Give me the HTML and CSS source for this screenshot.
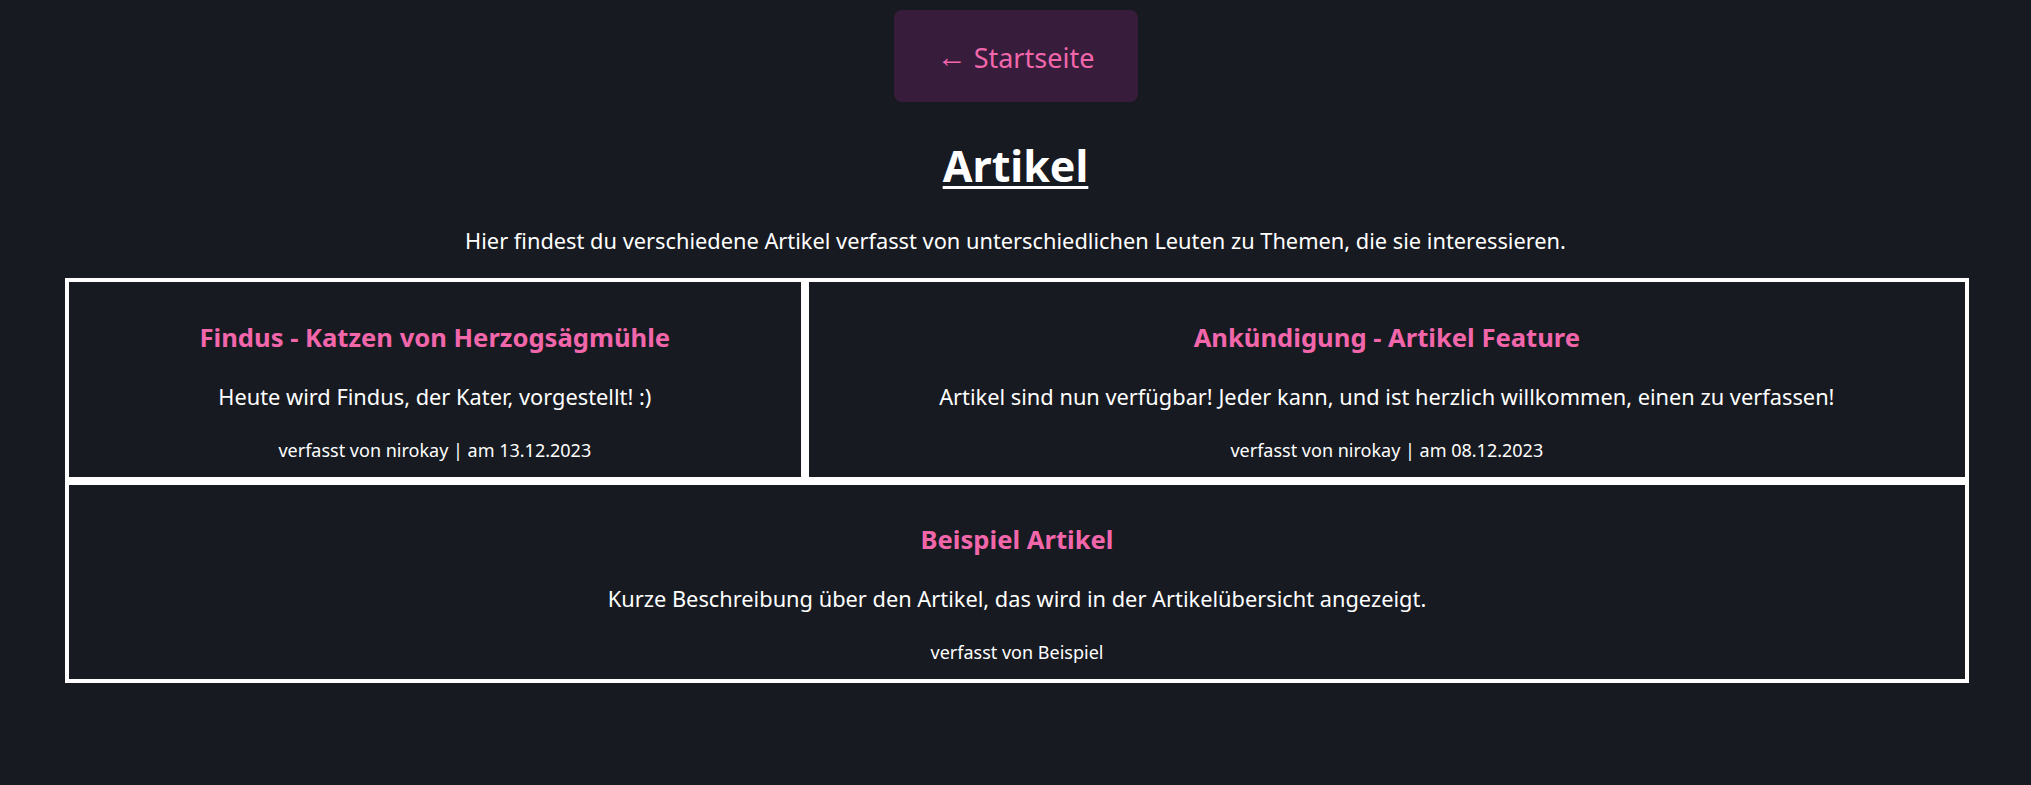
FILE: index.html
```html
<!DOCTYPE html>
<html lang="de">
<head>
<meta charset="utf-8">
<title>Artikel</title>
<link rel="stylesheet" href="styles.css">
</head>
<body>
<div class="top">
  <a class="home-btn" href="#"><span class="arrow">←</span> Startseite</a>
</div>
<h1 class="page-title">Artikel</h1>
<p class="intro">Hier findest du verschiedene Artikel verfasst von unterschiedlichen Leuten zu Themen, die sie interessieren.</p>
<div class="articles">
  <div class="card">
    <h2 class="card-title">Findus - Katzen von Herzogsägmühle</h2>
    <p class="card-desc">Heute wird Findus, der Kater, vorgestellt! :)</p>
    <p class="card-meta">verfasst von nirokay | am 13.12.2023</p>
  </div>
  <div class="card">
    <h2 class="card-title">Ankündigung - Artikel Feature</h2>
    <p class="card-desc">Artikel sind nun verfügbar! Jeder kann, und ist herzlich willkommen, einen zu verfassen!</p>
    <p class="card-meta">verfasst von nirokay | am 08.12.2023</p>
  </div>
  <div class="card">
    <h2 class="card-title">Beispiel Artikel</h2>
    <p class="card-desc">Kurze Beschreibung über den Artikel, das wird in der Artikelübersicht angezeigt.</p>
    <p class="card-meta">verfasst von Beispiel</p>
  </div>
</div>
</body>
</html>
```
FILE: styles.css
```css
html, body {
  margin: 0;
  padding: 0;
  background: #181a21;
  color: #ffffff;
  font-family: "Noto Sans", "Open Sans", sans-serif;
}

body {
  padding-top: 10px;
}

.top {
  display: flex;
  justify-content: center;
}

.home-btn {
  display: block;
  width: 244px;
  height: 92px;
  box-sizing: border-box;
  background: #371c3b;
  border-radius: 8px;
  color: #f266ab;
  text-decoration: none;
  font-size: 27px;
  line-height: 92px;
  text-align: center;
}

.arrow {
  font-size: 30px;
  vertical-align: 1px;
}

.page-title {
  margin: 34px 0 0;
  text-align: center;
  font-size: 43px;
  line-height: 60px;
  font-weight: 700;
  text-decoration: underline;
  text-decoration-thickness: 3px;
  text-underline-offset: 4px;
}

.intro {
  margin: 29.5px 0 0;
  text-align: center;
  font-size: 21.8px;
  line-height: 30px;
}

.articles {
  display: flex;
  flex-wrap: wrap;
  margin: 22.5px 62px 0 65px;
}

.card {
  flex: 1 1 auto;
  border: 4px solid #ffffff;
  padding: 38.5px 24px 15px;
  text-align: center;
}

.card-title {
  margin: 0;
  color: #f266ab;
  font-size: 25.6px;
  line-height: 34px;
  font-weight: 700;
}

.card-desc {
  margin: 27px 0 0;
  font-size: 21.8px;
  line-height: 30px;
}

.card-meta {
  margin: 26.2px 0 0;
  font-size: 18px;
  line-height: 24px;
}
```
